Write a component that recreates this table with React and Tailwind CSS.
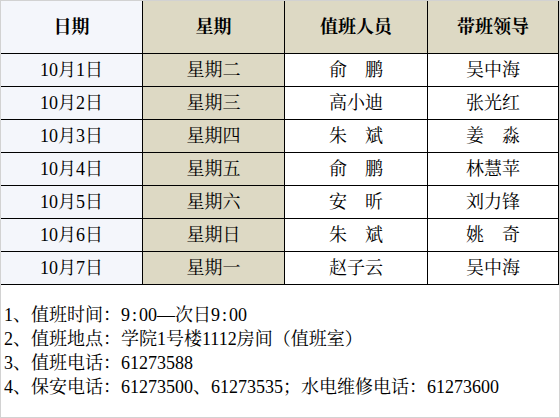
import React from "react";

const rows = [
    ["10月1日", "星期二", "俞　鹏", "吴中海"],
    ["10月2日", "星期三", "高小迪", "张光红"],
    ["10月3日", "星期四", "朱　斌", "姜　淼"],
    ["10月4日", "星期五", "俞　鹏", "林慧苹"],
    ["10月5日", "星期六", "安　昕", "刘力锋"],
    ["10月6日", "星期日", "朱　斌", "姚　奇"],
    ["10月7日", "星期一", "赵子云", "吴中海"],
];

// 每列的背景色
const bodyBg = ["bg-[#f4f6fb]", "bg-[#ddd9c4]", "bg-white", "bg-white"];
const headBg = ["bg-[#f4f6fb]", "bg-[#ddd9c4]", "bg-[#ddd9c4]", "bg-[#ddd9c4]"];

// 半角冒号按宋体宽度显示
const Colon = () => <span className="inline-block w-[9px] text-center">:</span>;

export default function App() {
    return (
        <div className="w-[560px] h-[418px] bg-white border border-[#d2d2d2] font-['Liberation_Serif','Noto_Serif_CJK_SC','Noto_Sans_CJK_SC',serif] text-black text-[18px]">
            <div className="grid grid-cols-[142px_142px_143px_131px]">
                {["日期", "星期", "值班人员", "带班领导"].map((h, i) => (
                    <div
                        key={h}
                        className={`h-[53px] flex items-center justify-center font-bold border-b border-r border-black ${headBg[i]}`}
                    >
                        {h}
                    </div>
                ))}
                {rows.map((r, ri) =>
                    r.map((c, ci) => (
                        <div
                            key={ri + "-" + ci}
                            className={`h-[33px] flex items-center justify-center border-b border-r border-black ${bodyBg[ci]}`}
                        >
                            {c}
                        </div>
                    ))
                )}
            </div>
            <div className="pt-[18px] pl-[3px] leading-[24px] whitespace-nowrap">
                <div>1、值班时间：9<Colon />00—次日9<Colon />00</div>
                <div>2、值班地点：学院1号楼1112房间（值班室）</div>
                <div>3、值班电话：61273588</div>
                <div>4、保安电话：61273500、61273535；水电维修电话：61273600</div>
            </div>
        </div>
    );
}
